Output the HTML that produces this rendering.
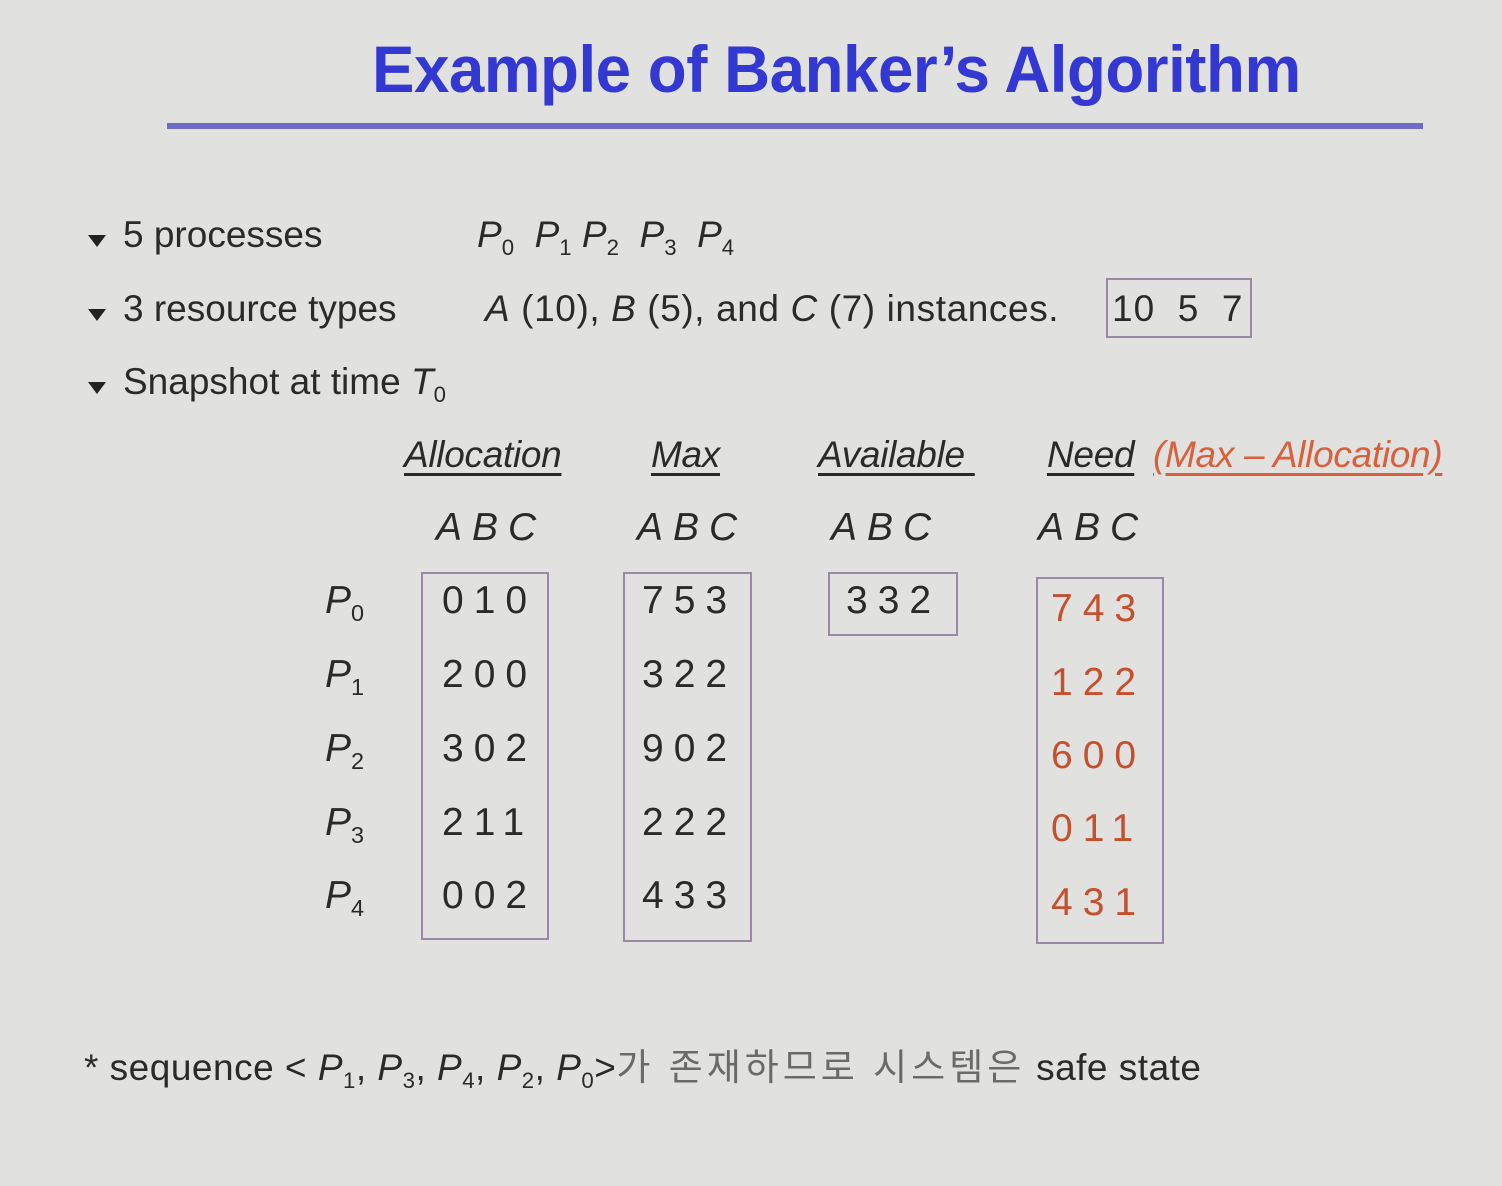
<!DOCTYPE html>
<html><head><meta charset="utf-8"><style>
html,body{margin:0;padding:0}
body{width:1502px;height:1186px;background:#e1e1df;position:relative;overflow:hidden;font-family:"Liberation Sans",Arial,sans-serif;color:#2a2a2a}
.a{position:absolute;white-space:nowrap;line-height:1}
.t{left:372px;top:36px;font-size:66px;font-weight:bold;color:#3438d2;transform:scaleX(0.965);transform-origin:left top;letter-spacing:-0.5px}
.hr{position:absolute;left:167px;top:123px;width:1256px;height:6px;background:#6d6ccb}
.b{font-size:37px;letter-spacing:0}
.i{font-style:italic}
sub{font-size:60%;vertical-align:-0.35em;font-style:normal;font-weight:normal}
.bul{position:absolute;width:0;height:0;border-left:9px solid transparent;border-right:9px solid transparent;border-top:12px solid #222}
.box{position:absolute;border:2px solid #9a88a6}
.d{font-size:39px;letter-spacing:10px}
.r{color:#c4502e}
.h{font-size:37px;font-style:italic;text-decoration:underline;text-underline-offset:6px;letter-spacing:-0.3px}
.abc{font-size:39px;font-style:italic;letter-spacing:10px}
.p{font-size:39px;font-style:italic}
</style></head><body>
<div class="a t">Example of Banker’s Algorithm</div>
<div class="hr"></div>

<div class="bul" style="left:88px;top:235px"></div>
<div class="a b" style="left:123px;top:216px">5 processes</div>
<div class="a b i" style="left:477px;top:216px">P<sub>0</sub>&nbsp; P<sub>1</sub> P<sub>2</sub>&nbsp; P<sub>3</sub>&nbsp; P<sub>4</sub></div>

<div class="bul" style="left:88px;top:309px"></div>
<div class="a b" style="left:123px;top:290px">3 resource types</div>
<div class="a b" style="left:485px;top:290px;letter-spacing:0.6px"><i>A</i> (10), <i>B</i> (5), and <i>C</i> (7) instances.</div>
<div class="box" style="left:1106px;top:278px;width:142px;height:56px"></div>
<div class="a b" style="left:1112px;top:290px;letter-spacing:1px">10&nbsp; 5&nbsp; 7</div>

<div class="bul" style="left:88px;top:382px"></div>
<div class="a b" style="left:123px;top:363px">Snapshot at time <i>T</i><sub>0</sub></div>

<div class="a h" style="left:404px;top:436px">Allocation</div>
<div class="a h" style="left:651px;top:436px">Max</div>
<div class="a h" style="left:818px;top:436px">Available&nbsp;</div>
<div class="a h" style="left:1047px;top:436px">Need</div>
<div class="a h r" style="left:1153px;top:436px;color:#d9603c">(Max – Allocation)</div>

<div class="a abc" style="left:436px;top:508px">ABC</div>
<div class="a abc" style="left:637px;top:508px">ABC</div>
<div class="a abc" style="left:831px;top:508px">ABC</div>
<div class="a abc" style="left:1038px;top:508px">ABC</div>

<div class="a p" style="left:325px;top:581px">P<sub>0</sub></div>
<div class="a p" style="left:325px;top:655px">P<sub>1</sub></div>
<div class="a p" style="left:325px;top:729px">P<sub>2</sub></div>
<div class="a p" style="left:325px;top:803px">P<sub>3</sub></div>
<div class="a p" style="left:325px;top:876px">P<sub>4</sub></div>

<div class="box" style="left:421px;top:572px;width:124px;height:364px"></div>
<div class="box" style="left:623px;top:572px;width:125px;height:366px"></div>
<div class="box" style="left:828px;top:572px;width:126px;height:60px"></div>
<div class="box" style="left:1036px;top:577px;width:124px;height:363px"></div>

<div class="a d" style="left:442px;top:581px">010</div>
<div class="a d" style="left:442px;top:655px">200</div>
<div class="a d" style="left:442px;top:729px">302</div>
<div class="a d" style="left:442px;top:803px">211</div>
<div class="a d" style="left:442px;top:876px">002</div>

<div class="a d" style="left:642px;top:581px">753</div>
<div class="a d" style="left:642px;top:655px">322</div>
<div class="a d" style="left:642px;top:729px">902</div>
<div class="a d" style="left:642px;top:803px">222</div>
<div class="a d" style="left:642px;top:876px">433</div>

<div class="a d" style="left:846px;top:581px">332</div>

<div class="a d r" style="left:1051px;top:589px">743</div>
<div class="a d r" style="left:1051px;top:663px">122</div>
<div class="a d r" style="left:1051px;top:736px">600</div>
<div class="a d r" style="left:1051px;top:809px">011</div>
<div class="a d r" style="left:1051px;top:883px">431</div>

<div class="a" style="left:84px;top:1049px;font-size:37px;letter-spacing:0.5px">* sequence &lt; <i>P</i><sub>1</sub>, <i>P</i><sub>3</sub>, <i>P</i><sub>4</sub>, <i>P</i><sub>2</sub>, <i>P</i><sub>0</sub>&gt;<span style="font-family:'Liberation Sans','Noto Sans CJK KR',sans-serif;color:#6a6a6a;letter-spacing:4px">가 존재하므로 시스템은</span> safe state</div>
</body></html>
